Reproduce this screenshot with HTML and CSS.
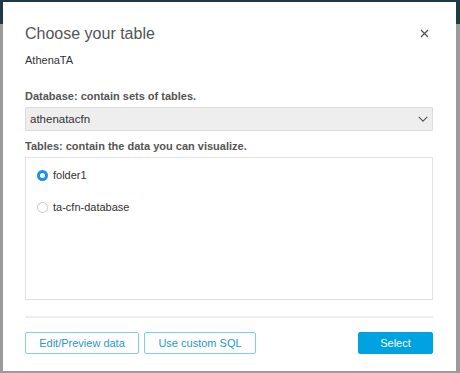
FILE: index.html
```html
<!DOCTYPE html>
<html>
<head>
<meta charset="utf-8">
<link rel="stylesheet" href="styles.css">
</head>
<body>
<div class="dialog">
  <div class="head">
    <h1 class="title">Choose your table</h1>
    <button class="close" aria-label="Close">
      <svg width="9" height="9" viewBox="0 0 9 9"><path d="M1 1L8 8M8 1L1 8" stroke="#555" stroke-width="1.3" fill="none"/></svg>
    </button>
  </div>
  <div class="source">AthenaTA</div>
  <div class="label db-label">Database: contain sets of tables.</div>
  <div class="select">
    <span>athenatacfn</span>
    <svg width="10" height="7" viewBox="0 0 10 7"><path d="M0.7 0.8L5 5.2L9.3 0.8" stroke="#555" stroke-width="1.1" fill="none"/></svg>
  </div>
  <div class="label tb-label">Tables: contain the data you can visualize.</div>
  <div class="list">
    <div class="row"><span class="radio on"></span><span>folder1</span></div>
    <div class="row"><span class="radio"></span><span>ta-cfn-database</span></div>
  </div>
  <div class="divider"></div>
  <div class="actions">
    <button class="btn">Edit/Preview data</button>
    <button class="btn btn-sql">Use custom SQL</button>
    <button class="btn primary">Select</button>
  </div>
</div>
</body>
</html>
```
FILE: styles.css
```css
html, body {
  margin: 0;
  padding: 0;
}
body {
  width: 460px;
  height: 373px;
  overflow: hidden;
  background: linear-gradient(#1e3a44 0, #1e3a44 24px, #9b9b9b 24px, #9b9b9b 100%);
  font-family: "Liberation Sans", Arial, sans-serif;
  padding: 2px 4px 0 3px;
  box-sizing: border-box;
}
.dialog {
  background: #fff;
  width: 453px;
  height: 369px;
  box-sizing: border-box;
  padding: 22px 23px 0 22px;
  display: flex;
  flex-direction: column;
}
.head {
  display: flex;
  justify-content: space-between;
  align-items: center;
  height: 20px;
}
.title {
  margin: 0;
  font-size: 16px;
  font-weight: normal;
  line-height: 20px;
  color: #555;
}
.close {
  border: 0;
  background: none;
  padding: 0;
  width: 9px;
  height: 9px;
  margin-right: 4px;
  margin-top: -2px;
  display: flex;
}
.source {
  margin-top: 10px;
  font-size: 11px;
  line-height: 13px;
  color: #333;
}
.label {
  font-size: 11px;
  line-height: 13px;
  font-weight: bold;
  color: #555;
}
.db-label {
  margin-top: 23px;
}
.select {
  margin-top: 4px;
  height: 24px;
  box-sizing: border-box;
  background: #eee;
  border: 1px solid #dcdcdc;
  border-radius: 1px;
  display: flex;
  align-items: center;
  justify-content: space-between;
  padding: 0 4px 0 4px;
  font-size: 11.5px;
  color: #333;
}
.tb-label {
  margin-top: 9px;
}
.list {
  margin-top: 4px;
  height: 143px;
  box-sizing: border-box;
  border: 1px solid #e2e2e2;
  padding: 6px 0 0 11px;
  display: flex;
  flex-direction: column;
  gap: 10px;
}
.row {
  display: flex;
  align-items: center;
  gap: 5px;
  height: 22px;
  font-size: 11px;
  color: #333;
}
.radio {
  width: 11px;
  height: 11px;
  box-sizing: border-box;
  border-radius: 50%;
  border: 1px solid #c8c8c8;
  background: #fff;
}
.radio.on {
  border: 3.5px solid #1a90ef;
  background: #fff;
}
.divider {
  margin-top: 16px;
  height: 2px;
  background: #eee;
}
.actions {
  margin-top: 14px;
  display: flex;
  gap: 5px;
}
.btn {
  height: 22px;
  box-sizing: border-box;
  background: #fff;
  border: 1px solid #80cdee;
  border-radius: 2px;
  color: #2698d4;
  font-family: "Liberation Sans", Arial, sans-serif;
  font-size: 11px;
  padding: 0;
  width: 114px;
}
.btn-sql {
  width: 112px;
}
.primary {
  margin-left: auto;
  width: 75px;
  background: #00a2df;
  border-color: #00a2df;
  color: #fff;
}
```
